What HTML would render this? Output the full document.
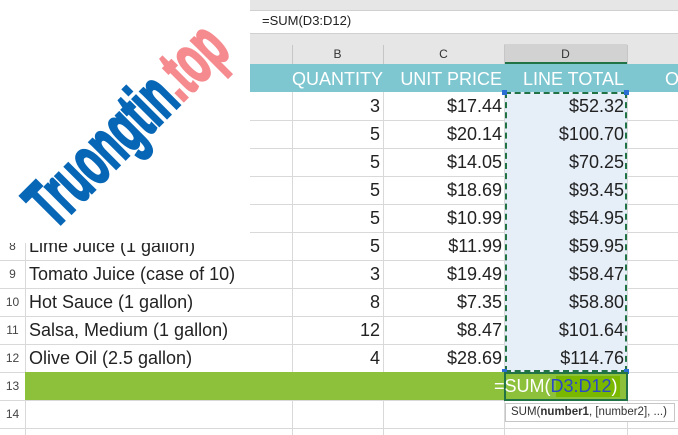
<!DOCTYPE html>
<html><head><meta charset="utf-8"><style>
*{margin:0;padding:0;box-sizing:border-box}
html,body{width:678px;height:435px;overflow:hidden}
body{background:#fff;position:relative;font-family:"Liberation Sans",sans-serif}
.a{position:absolute}
.hl{position:absolute;left:0;width:678px;height:1px;background:#d9d9d9}
.vl{position:absolute;top:92px;width:1px;height:343px;background:#d9d9d9}
.t{position:absolute;font-size:18px;color:#222;line-height:28px;white-space:nowrap}
.r{text-align:right}
.rn{position:absolute;left:0;width:25px;text-align:center;font-size:12px;color:#444;line-height:28px}
</style></head><body>
<div class="a" style="left:0;top:0;width:678px;height:44px;background:#e6e6e6"></div>
<div class="a" style="left:250px;top:10px;width:428px;height:24px;background:#fff;border-top:1px solid #d0d0d0;border-bottom:1px solid #d0d0d0"></div>
<div class="a" style="left:262px;top:13px;font-size:13px;color:#222">=SUM(D3:D12)</div>
<div class="a" style="left:0;top:44px;width:678px;height:20px;background:#e6e6e6"></div>
<div class="a" style="left:504px;top:44px;width:123px;height:20px;background:#d2d2d2;border-bottom:2px solid #217346"></div>
<div class="a" style="left:292px;top:45px;width:1px;height:19px;background:#c6c6c6"></div>
<div class="a" style="left:383px;top:45px;width:1px;height:19px;background:#c6c6c6"></div>
<div class="a" style="left:504px;top:45px;width:1px;height:19px;background:#c6c6c6"></div>
<div class="a" style="left:627px;top:45px;width:1px;height:19px;background:#c6c6c6"></div>
<div class="a" style="left:292px;top:47px;width:91px;text-align:center;font-size:12px;color:#333">B</div>
<div class="a" style="left:383px;top:47px;width:121px;text-align:center;font-size:12px;color:#333">C</div>
<div class="a" style="left:504px;top:47px;width:123px;text-align:center;font-size:12px;color:#333">D</div>
<div class="a" style="left:25px;top:64px;width:653px;height:28px;background:#7ec7d0"></div>
<div class="t r" style="left:292px;top:65px;width:89px;color:#fff">QUANTITY</div>
<div class="t r" style="left:383px;top:65px;width:119px;color:#fff">UNIT PRICE</div>
<div class="t r" style="left:504px;top:65px;width:120px;color:#fff">LINE TOTAL</div>
<div class="t" style="left:665px;top:65px;color:#fff">O</div>
<div class="hl" style="top:120px"></div><div class="hl" style="top:148px"></div><div class="hl" style="top:176px"></div><div class="hl" style="top:204px"></div><div class="hl" style="top:232px"></div><div class="hl" style="top:260px"></div><div class="hl" style="top:288px"></div><div class="hl" style="top:316px"></div><div class="hl" style="top:344px"></div><div class="hl" style="top:372px"></div><div class="hl" style="top:400px"></div><div class="hl" style="top:428px"></div>
<div class="vl" style="left:25px;top:44px;height:391px"></div><div class="vl" style="left:292px"></div><div class="vl" style="left:383px"></div><div class="vl" style="left:504px"></div><div class="vl" style="left:627px"></div>
<div class="a" style="left:505px;top:92px;width:122px;height:280px;background:#e6eef8;border:2px dashed #217346"></div>
<div class="a" style="left:502px;top:90px;width:5px;height:5px;background:#2b6fd4"></div>
<div class="a" style="left:624px;top:90px;width:5px;height:5px;background:#2b6fd4"></div>
<div class="a" style="left:502px;top:369px;width:5px;height:5px;background:#2b6fd4"></div>
<div class="a" style="left:624px;top:369px;width:5px;height:5px;background:#2b6fd4"></div>
<div class="t r" style="left:292px;top:92px;width:88px;line-height:28px">3<br>5<br>5<br>5<br>5<br>5<br>3<br>8<br>12<br>4</div>
<div class="t r" style="left:383px;top:92px;width:119px">$17.44<br>$20.14<br>$14.05<br>$18.69<br>$10.99<br>$11.99<br>$19.49<br>$7.35<br>$8.47<br>$28.69</div>
<div class="t r" style="left:504px;top:92px;width:120px">$52.32<br>$100.70<br>$70.25<br>$93.45<br>$54.95<br>$59.95<br>$58.47<br>$58.80<br>$101.64<br>$114.76</div>
<div class="t" style="left:29px;top:232px">Lime Juice (1 gallon)<br>Tomato Juice (case of 10)<br>Hot Sauce (1 gallon)<br>Salsa, Medium (1 gallon)<br>Olive Oil (2.5 gallon)</div>
<div class="rn" style="top:232px">8</div><div class="rn" style="top:260px">9</div><div class="rn" style="top:288px">10</div><div class="rn" style="top:316px">11</div><div class="rn" style="top:344px">12</div><div class="rn" style="top:372px">13</div><div class="rn" style="top:400px">14</div>
<div class="a" style="left:25px;top:372px;width:602px;height:28px;background:#8dc13c"></div>
<div class="a" style="left:504px;top:372px;width:124px;height:29px;border:2px solid #217346"></div>
<div class="a" style="left:556px;top:376px;width:64px;height:21px;background:#7ab800"></div>
<div class="t" style="left:494px;top:372px;color:#fff">=SUM(<span style="color:#2a48c8">D3:D12</span>)</div>
<div class="a" style="left:505px;top:403px;width:170px;height:19px;background:#fff;border:1px solid #c6c6c6;font-size:11.5px;color:#333;line-height:17px;padding-left:5px;white-space:nowrap">SUM(<b>number1</b>, [number2], ...)</div>
<div class="a" style="left:0;top:0;width:250px;height:243px;background:#fff;overflow:hidden">
<div class="a" style="left:12px;top:244px;transform-origin:0 0;transform:rotate(-45deg) scaleX(0.56);font-size:70px;font-weight:bold;line-height:1;white-space:nowrap;margin-top:-55px;color:#0767b6;-webkit-text-stroke:3px #0767b6">Truongtin<span style="color:#f58a8f;-webkit-text-stroke:3px #f58a8f">.top</span></div>
</div>
</body></html>
